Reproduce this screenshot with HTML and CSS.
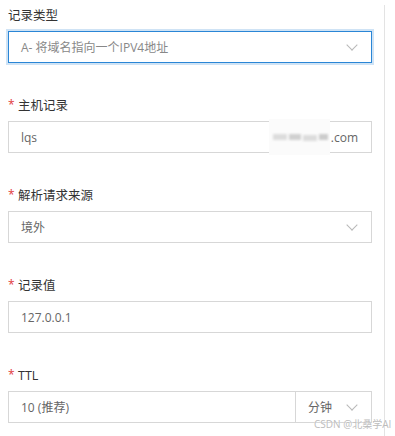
FILE: index.html
```html
<!DOCTYPE html>
<html>
  <head>
    <meta charset="utf-8">
    <link rel="stylesheet" href="styles.css">
  </head>
  <body>
    <div class="panel">
      <div class="field">
        <div class="label">记录类型</div>
        <div class="box select focus">
          <span class="val muted">A- 将域名指向一个IPV4地址</span>
          <span class="arrow"></span>
        </div>
      </div>
      <div class="field">
        <div class="label"><i class="req">*</i>主机记录</div>
        <div class="box">
          <span class="val grow">lqs</span>
          <span class="mask"><b></b><b></b><b></b><b></b></span><span class="val">.com</span>
        </div>
      </div>
      <div class="field">
        <div class="label"><i class="req">*</i>解析请求来源</div>
        <div class="box select">
          <span class="val">境外</span>
          <span class="arrow"></span>
        </div>
      </div>
      <div class="field">
        <div class="label"><i class="req">*</i>记录值</div>
        <div class="box">
          <span class="val">127.0.0.1</span>
        </div>
      </div>
      <div class="field">
        <div class="label"><i class="req">*</i>TTL</div>
        <div class="group">
          <div class="box grow"><span class="val">10 (推荐)</span></div>
          <div class="box select unit">
            <span class="val">分钟</span>
            <span class="arrow"></span>
          </div>
        </div>
      </div>
    </div>
    <div class="mark">CSDN @北桑学AI</div>
  </body>
</html>
```

FILE: styles.css
```css
body {margin: 0; background: #fff; font-family: "Segoe UI", "Open Sans", "Noto Sans CJK SC", sans-serif; font-size: 12px; color: #333}

.panel {width: 385px; margin-top: 5px; padding: 1px 0 0 8px; border-right: 1px solid #e3e3e3; min-height: 440px; box-sizing: border-box}

.field {margin-bottom: 33px}
.label {height: 20px; line-height: 20px; margin-bottom: 5px; font-size: 12.5px; color: #333; display: flex; align-items: center}
.req {font-style: normal; color: #e0383b; width: 10px; font-size: 12px; margin-top: -3px}

.box {display: flex; align-items: center; height: 32px; width: 364px; box-sizing: border-box; border: 1px solid #d7d7d7; padding: 0 13px 0 12px; color: #666; background: #fff}
.box.focus {border-color: #2a86d6; box-shadow: 0 0 0 2px #cfe3f5}
.val {white-space: nowrap}
.muted {color: #888}
.grow {flex: 1}
.select .val {flex: 1}

.arrow {width: 7px; height: 7px; border-right: 1px solid #b8b8b8; border-bottom: 1px solid #b8b8b8; transform: rotate(45deg); margin: -5px 2px 0 0}

.mask {display: inline-block; position: relative; width: 61px; height: 36px; margin: -2px 1px -2px 0; background: #fbfbfb}
.mask b {position: absolute; top: 15px; height: 6px; background: #dcdcdc; filter: blur(1px)}
.mask b:nth-child(1) {left: 4px; width: 14px}
.mask b:nth-child(2) {left: 20px; width: 12px; background: #d0d0d0}
.mask b:nth-child(3) {left: 34px; width: 14px; top: 16px}
.mask b:nth-child(4) {left: 50px; width: 9px; background: #cccccc}

.group {display: flex; width: 364px}
.group .box {width: auto}
.group .unit {width: 76px; flex: none; border-left: none; padding: 0 13px 0 12px}

.mark {position: absolute; left: 314px; top: 416px; font-size: 10px; color: #bcbcbc; white-space: nowrap; text-shadow: 0 0 1px #fff}
```
